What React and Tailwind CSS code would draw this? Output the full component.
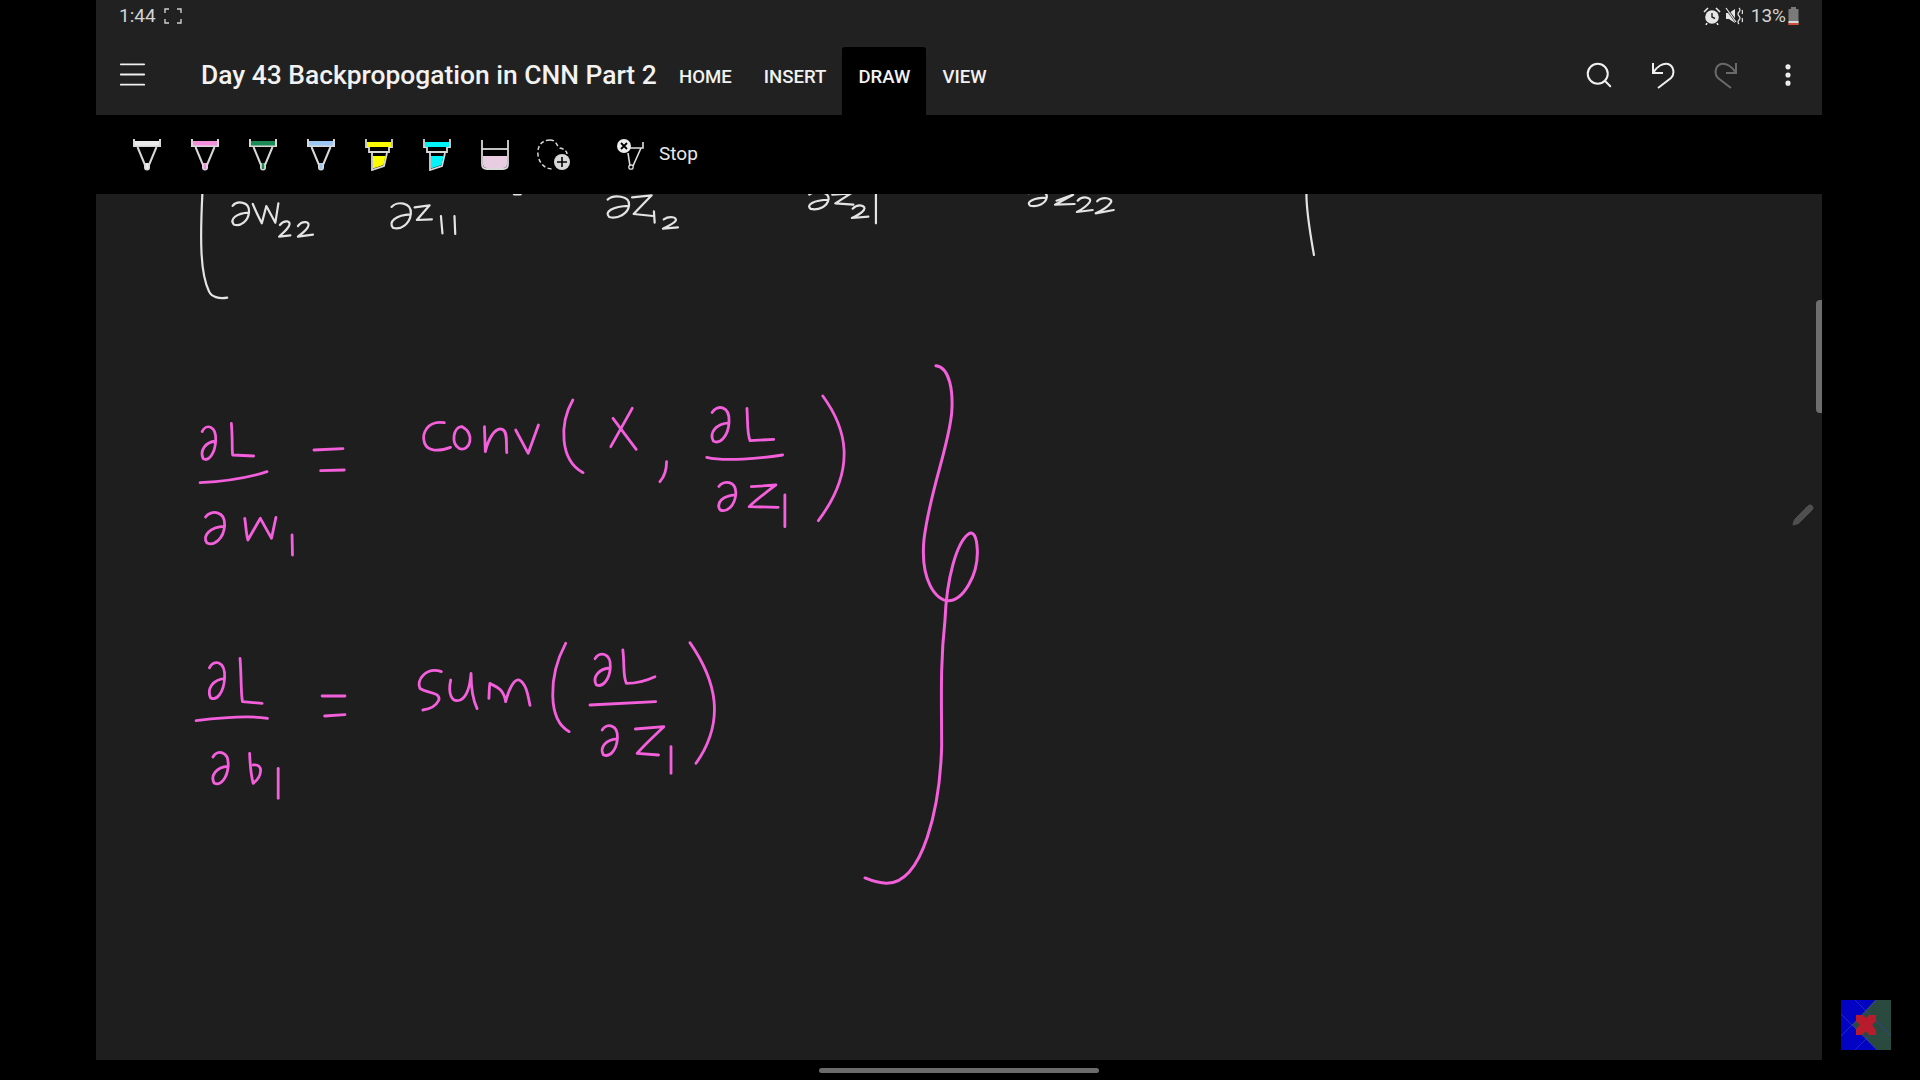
import React from "react";
import { Menu, Search, MoreVertical, Pencil } from "lucide-react";

// handwritten partial sign, fitted into a box
function dee(x0, y0, x1, y1) {
  const w = x1 - x0;
  const h = y1 - y0;
  return `M${x0 + w * 0.05} ${y0 + h * 0.16} C${x0 + w * 0.3} ${y0 - h * 0.06} ${x1 + w * 0.05} ${y0 - h * 0.04} ${x1} ${y0 + h * 0.42} C${x1 - w * 0.05} ${y0 + h * 0.8} ${x0 + w * 0.5} ${y1 + h * 0.04} ${x0 + w * 0.12} ${y1 - h * 0.06} C${x0 - w * 0.12} ${y0 + h * 0.72} ${x0 + w * 0.25} ${y0 + h * 0.46} ${x1} ${y0 + h * 0.44}`;
}

const topRow = [
  "M43 12 C40 150 40 250 52 305 C55 320 65 328 76 323",
  dee(82, 36, 105, 108),
  "M110 42 C115 70 120 90 122 100 L128 48 L140 98 L144 40",
  "M146 105 C152 88 162 92 158 108 C155 122 148 132 145 140 L160 136",
  "M170 108 C176 90 188 94 183 112 C180 125 174 132 170 140 L190 134",
  dee(293, 38, 320, 118),
  "M325 52 L345 46 L328 90 L348 88",
  "M360 78 L362 130",
  "M378 78 L379 132",
  dee(580, 18, 610, 85),
  "M614 22 L640 16 L616 72 L642 78",
  "M643 64 L644 98",
  "M656 88 C664 76 674 82 672 92 C668 104 660 110 655 116 L675 112",
  dee(848, 5, 875, 60),
  "M880 14 L905 10 L884 40 L908 44",
  "M907 56 C914 40 926 46 922 60 C918 72 912 78 906 84 L928 80",
  "M938 10 L938 100",
  dee(1140, 2, 1165, 50),
  "M1178 32 L1200 14 L1176 44 L1202 42",
  "M1206 32 C1212 16 1226 22 1222 36 C1218 50 1210 60 1205 66 L1226 60",
  "M1232 34 C1238 18 1254 24 1250 38 C1246 52 1238 62 1230 70 L1254 60",
  "M1510 12 C1510 70 1515 130 1520 195",
  "M457 13 L466 13",
];

const convRow = [
  dee(48, 168, 80, 272),
  "M115 160 C118 200 116 240 118 255 L165 258",
  "M45 338 C90 335 150 325 195 305",
  dee(55, 425, 100, 525),
  "M145 445 C148 470 148 490 152 510 L180 445 L205 505 L215 442",
  "M251 495 L252 555",
  "M300 240 L365 236",
  "M315 302 L368 300",
  "M592 158 C555 150 540 190 548 220 C555 245 580 245 606 232",
  "M632 170 C612 170 606 220 626 236 C650 246 662 190 632 170",
  "M682 170 L684 245 C690 210 705 170 722 178 C735 185 730 220 732 248",
  "M752 180 L780 250 L803 165",
  "M880 90 C850 160 850 270 903 308",
  "M1013 115 L965 230",
  "M970 145 L1022 238",
  "M1090 275 C1090 300 1085 320 1075 335",
  dee(1190, 110, 1230, 220),
  "M1270 115 C1272 150 1270 190 1277 212 L1330 208",
  "M1180 262 C1220 275 1300 265 1350 255",
  dee(1205, 335, 1245, 425),
  "M1280 350 L1335 345 C1310 370 1290 390 1275 410 L1340 412",
  "M1355 375 L1355 470",
  "M1440 78 C1490 170 1520 290 1430 452",
];

const sumRow = [
  dee(80, 95, 125, 210),
  "M168 85 C172 130 170 190 175 215 L230 220",
  "M45 272 C100 265 190 255 245 265",
  dee(90, 365, 135, 465),
  "M195 370 C196 400 200 440 205 460 C230 440 235 400 205 405",
  "M275 415 L275 505",
  "M398 198 L462 198",
  "M405 258 L462 254",
  "M732 125 C690 110 660 150 672 175 C690 190 730 185 725 210 C715 232 695 238 680 240",
  "M758 150 C750 190 760 220 785 210 C805 200 812 170 815 130 C815 170 820 210 832 236",
  "M865 205 C866 185 866 170 868 160 C880 170 905 170 912 215 C920 180 935 145 950 150 C970 160 975 200 980 226",
  "M1080 40 C1030 140 1030 270 1090 305",
  dee(1160, 70, 1205, 170),
  "M1240 60 C1245 100 1240 140 1250 160 C1280 160 1310 150 1330 140",
  "M1148 225 L1332 215",
  dee(1180, 285, 1225, 380),
  "M1275 297 L1355 290 C1330 315 1300 345 1280 370 L1340 375",
  "M1375 350 L1375 430",
  "M1428 38 C1500 150 1530 270 1445 400",
];

const bigCurve =
  "M258 45 C300 50 310 120 305 180 C295 280 240 400 222 540 C210 660 260 715 295 715 C340 715 385 640 382 570 C380 530 370 515 355 525 C320 550 290 650 285 770 C270 900 275 1000 275 1130 C270 1300 220 1520 110 1520 C90 1520 70 1515 45 1505";

function Strokes({ paths, transform, color, width = 2 }) {
  return (
    <g transform={transform} fill="none" stroke={color} strokeWidth={width} strokeLinecap="round" strokeLinejoin="round">
      {paths.map((d, i) => (
        <path key={i} d={d} vectorEffect="non-scaling-stroke" />
      ))}
    </g>
  );
}

function Pen({ color }) {
  return (
    <svg width="28" height="32" viewBox="0 0 28 32" fill="none">
      <path d="M1 0 V7 H27 V0" stroke="#d8d8d8" strokeWidth="2" />
      <rect x="2" y="2" width="24" height="4.5" fill={color} />
      <path d="M4.5 8 L12 26 M23.5 8 L16 26" stroke="#d8d8d8" strokeWidth="2" />
      <path d="M11 24 H17 V28.5 A3 3 0 0 1 11 28.5 Z" fill="#d8d8d8" />
      <rect x="12.8" y="24" width="2.4" height="6" fill={color} />
    </svg>
  );
}

function Marker({ color }) {
  return (
    <svg width="28" height="32" viewBox="0 0 28 32" fill="none">
      <path d="M1 0 V8 H4 V13 H24 V8 H27 V0" stroke="#d8d8d8" strokeWidth="1.8" />
      <rect x="2" y="3" width="24" height="5" fill={color} />
      <path d="M7 14 V31 L19 27 L22 14" stroke="#d8d8d8" strokeWidth="1.8" />
      <path d="M8 17 H20.5 L18.5 26 L8 29.5 Z" fill={color} />
    </svg>
  );
}

function Bucket() {
  return (
    <svg width="28" height="30" viewBox="0 0 28 30" fill="none">
      <path d="M1 0 V24 Q1 29 6 29 H22 Q27 29 27 24 V0" stroke="#d8d8d8" strokeWidth="1.8" />
      <path d="M1 9 H27" stroke="#d8d8d8" strokeWidth="1.8" />
      <path d="M2 16 H26 V24 Q26 28 22 28 H6 Q2 28 2 24 Z" fill="#e8cde2" />
    </svg>
  );
}

function Lasso() {
  return (
    <svg width="34" height="32" viewBox="0 0 34 32" fill="none">
      <path d="M13 1 C4 1 0 8 1 16 C2 24 8 30 15 30 M13 1 C20 1 19 7 23 9 C27 10 30 12 30 15" stroke="#d8d8d8" strokeWidth="1.5" strokeDasharray="4 2.5" />
      <circle cx="25" cy="23" r="8" fill="#d8d8d8" />
      <path d="M25 18 V28 M20 23 H30" stroke="#000" strokeWidth="1.6" />
    </svg>
  );
}

function StopPen() {
  return (
    <svg width="27" height="32" viewBox="0 0 27 32" fill="none">
      <path d="M26 3 V9 H13 M24 9 L16 27 M11 14 L13 27" stroke="#e0e0e0" strokeWidth="1.6" />
      <circle cx="14" cy="28" r="2.2" stroke="#e0e0e0" strokeWidth="1.3" />
      <circle cx="7" cy="7" r="7" fill="#eee" />
      <path d="M4 4 L10 10 M10 4 L4 10" stroke="#000" strokeWidth="1.8" />
    </svg>
  );
}

function UndoIcon({ color, flip }) {
  return (
    <svg width="24" height="27" viewBox="0 0 24 27" fill="none" stroke={color} strokeWidth="2" className={flip ? "-scale-x-100" : ""}>
      <path d="M2 1 V11 H12" />
      <path d="M2 11 C6 4 12 1 17 2 C23 4 24 12 20 16 L7 26" />
    </svg>
  );
}

function Thumbnail() {
  return (
    <svg className="absolute left-[1841px] top-[1000px]" width="50" height="50" viewBox="0 0 50 50">
      <rect width="50" height="50" fill="#0303c4" />
      <polygon points="34,0 50,0 50,50 36,50 11,25" fill="#2b4a3f" />
      <path d="M14 0 L50 36 M0 36 L36 0 M0 14 L36 50 M14 50 L30 34" stroke="#3a3ad0" strokeWidth="0.6" />
      <path d="M15 15 H22 L25 18 L28 15 H35 V21 L31 25 L35 30 V35 H28 L25 31 L21 35 H15 V29 L19 25 L15 21 Z" fill="#b81c2c" />
    </svg>
  );
}

const tabs = ["HOME", "INSERT", "DRAW", "VIEW"];

export default function App() {
  return (
    <div className="relative w-[1920px] h-[1080px] overflow-hidden bg-black font-['Roboto',sans-serif]">
      <div className="ml-[96px] w-[1726px] flex flex-col">
        {/* status bar */}
        <div className="h-[47px] bg-[#212121] flex items-start justify-between pl-[23px] pr-[23px] pt-[5px] text-[19px] leading-[22px] text-[#d4d4d4]">
          <div className="flex items-center gap-[8px]">
            <span>1:44</span>
            <svg width="18" height="16" viewBox="0 0 18 16" fill="none" stroke="#cfcfcf" strokeWidth="1.4">
              <path d="M1 5 V1 H5 M13 1 H17 V5 M17 11 V15 H13 M5 15 H1 V11" />
            </svg>
          </div>
          <div className="flex items-center">
            <svg width="18" height="18" viewBox="0 0 18 18" className="mr-[4px]">
              <circle cx="9" cy="10" r="6.8" fill="#e6e6e6" />
              <path d="M9 6 V10 L12 11.5" stroke="#212121" strokeWidth="1.4" fill="none" />
              <path d="M1 5 L5 1 M17 5 L13 1 M4 16 L3 18 M14 16 L15 18" stroke="#e6e6e6" strokeWidth="1.6" />
            </svg>
            <svg width="18" height="18" viewBox="0 0 18 18" className="mr-[8px]">
              <path d="M1 6 H4 L10 2 V16 L4 12 H1 Z" fill="#e6e6e6" />
              <path d="M1 1 L12 16" stroke="#212121" strokeWidth="2.4" />
              <path d="M1 1 L11 15" stroke="#e6e6e6" strokeWidth="1.2" />
              <path d="M14 1 Q16 3 14 5 Q12 7 14 9 Q16 11 14 13 Q12 15 14 17 M17 3 Q18 5 17 7 M17 11 Q18 13 17 15" stroke="#e6e6e6" strokeWidth="1.2" fill="none" />
            </svg>
            <span>13%</span>
            <svg width="11" height="18" viewBox="0 0 11 18" className="ml-[2px]">
              <path d="M3 0 H8 V2 H10.5 V18 H0.5 V2 H3 Z" fill="#7a7a7a" />
              <rect x="0.5" y="14" width="10" height="2" fill="#d9d9d9" />
              <rect x="0.5" y="16" width="10" height="2" fill="#d64a3a" />
            </svg>
          </div>
        </div>

        {/* header */}
        <div className="h-[68px] bg-[#212121] flex items-stretch">
          <div className="w-[105px] pl-[19px] flex items-center pb-[14px]">
            <Menu size={35} strokeWidth={1.8} color="#f0f0f0" absoluteStrokeWidth />
          </div>
          <div className="w-[462px] flex items-center text-[26.4px] font-medium text-[#f2f2f2] whitespace-nowrap pb-[11px]">
            Day 43 Backpropogation in CNN Part 2
          </div>
          <div className="flex items-stretch">
            {tabs.map((t) => (
              <div
                key={t}
                className={
                  t === "DRAW"
                    ? "bg-black rounded-t-[3px] flex items-center px-[16px] pb-[6px] text-[18.6px] font-medium text-[#f2f2f2]"
                    : "flex items-center px-[16px] pb-[6px] text-[18.6px] font-medium text-[#f2f2f2]"
                }
              >
                {t}
              </div>
            ))}
          </div>
          <div className="ml-auto flex items-center pr-[3px] pb-[12px]">
            <div className="w-[63px] flex justify-center">
              <Search size={30} strokeWidth={2} color="#f0f0f0" absoluteStrokeWidth />
            </div>
            <div className="w-[63px] flex justify-center pl-[3px]">
              <UndoIcon color="#f0f0f0" />
            </div>
            <div className="w-[63px] flex justify-center pl-[3px]">
              <UndoIcon color="#6a6a6a" flip />
            </div>
            <div className="w-[63px] flex justify-center">
              <MoreVertical size={28} strokeWidth={2.4} color="#f0f0f0" />
            </div>
          </div>
        </div>

        {/* pens */}
        <div className="h-[79px] bg-black flex items-center pl-[37px]">
          <div className="flex items-center gap-[30px]">
            <Pen color="#ebebeb" />
            <Pen color="#f48fdc" />
            <Pen color="#1b8a54" />
            <Pen color="#9cc8f5" />
            <Marker color="#fcfc00" />
            <Marker color="#00f4f8" />
            <Bucket />
          </div>
          <div className="ml-[28px]">
            <Lasso />
          </div>
          <div className="ml-[46px]">
            <StopPen />
          </div>
          <span className="ml-[15px] text-[19px] text-[#e8e8e8]">Stop</span>
        </div>

        {/* canvas */}
        <div className="relative h-[866px] bg-[#1e1e1e] overflow-hidden">
          <svg className="block" width="1726" height="866" viewBox="96 194 1726 866">
            <Strokes paths={topRow} transform="translate(170 190) scale(0.7526 0.3333)" color="#e4e4e4" width={2.2} />
            <Strokes paths={convRow} transform="translate(180 370) scale(0.4464 0.3333)" color="#f45fdc" width={2.8} />
            <Strokes paths={sumRow} transform="translate(180 630) scale(0.3571 0.3333)" color="#f45fdc" width={2.8} />
            <Strokes paths={[bigCurve]} transform="translate(850 350) scale(0.3333 0.3508)" color="#f45fdc" width={3} />
          </svg>
          <div className="absolute left-[91px] top-[-2px] w-[36px] h-[2px] bg-[#d0c0e4]" />
          <div className="absolute right-0 top-[106px] w-[6px] h-[113px] rounded-l-[4px] bg-[#6e6e6e]" />
          <Pencil className="absolute left-[1695px] top-[309px]" size={24} fill="#4f4f4f" color="#4f4f4f" strokeWidth={1} />
        </div>

        {/* nav bar */}
        <div className="h-[20px] flex items-center justify-center">
          <div className="w-[280px] h-[5px] rounded-full bg-[#6b6b6b]" />
        </div>
      </div>
      <Thumbnail />
    </div>
  );
}
